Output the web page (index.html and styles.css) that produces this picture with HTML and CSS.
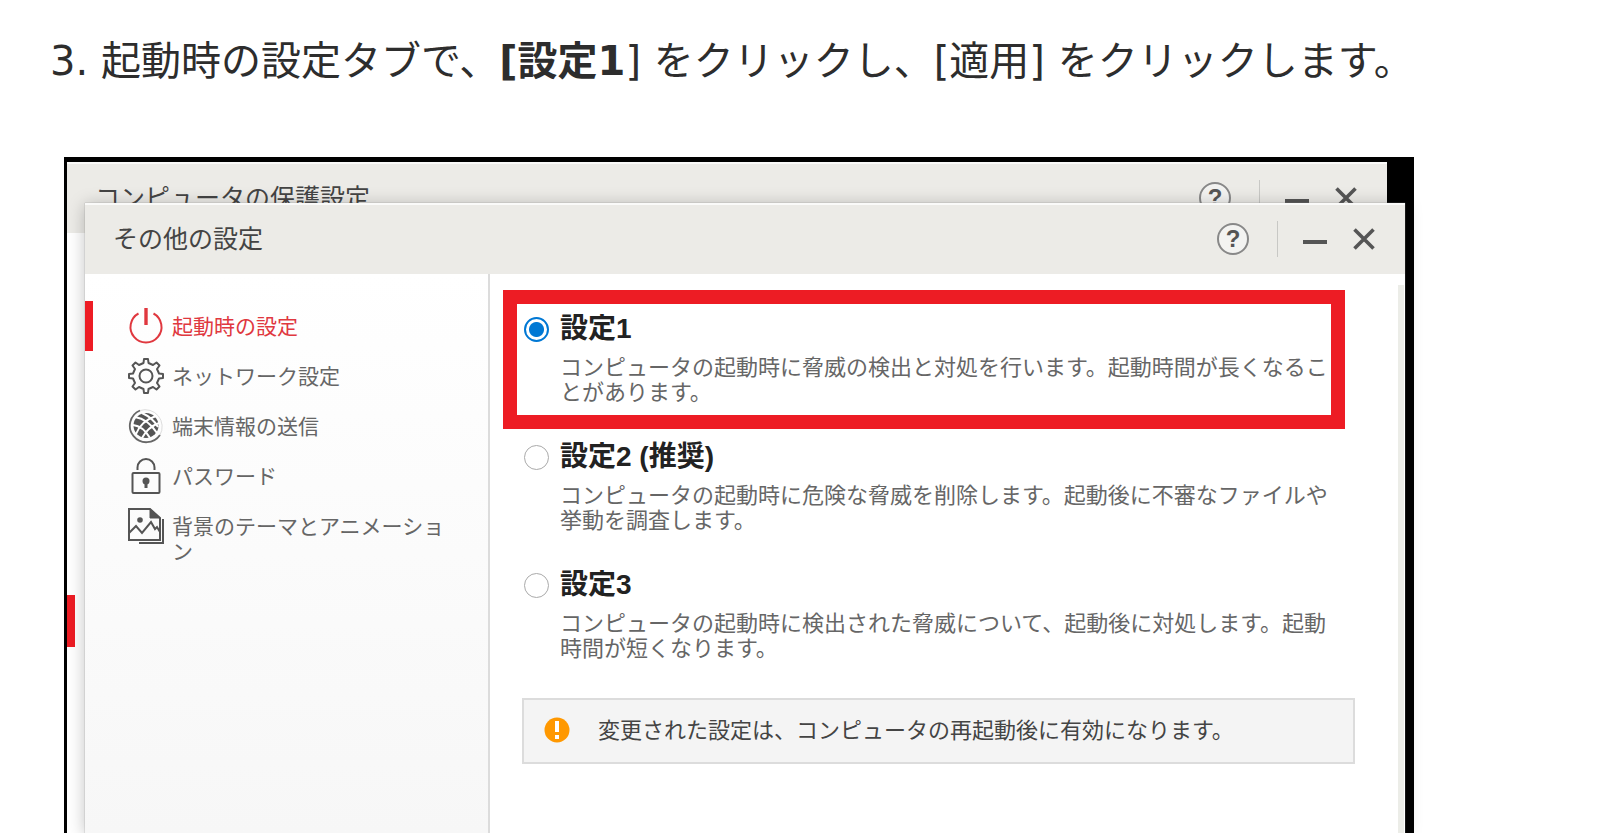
FILE: index.html
```
<!DOCTYPE html>
<html lang="ja">
<head>
    <meta charset="UTF-8">
    <meta name="viewport" content="width=device-width, initial-scale=1.0">
    <title>起動時の設定</title>
    <link rel="stylesheet" href="styles.css">
</head>
<body>
    <p class="step">3. 起動時の設定タブで、<b>[設定1</b>] をクリックし、[適用] をクリックします。</p>

    <div class="desktop">
        <!-- window behind -->
        <section class="window window-back">
            <header class="titlebar">
                <h2 class="title">コンピュータの保護設定</h2>
                <button class="help" aria-label="ヘルプ">?</button>
                <span class="divider"></span>
                <button class="control" aria-label="最小化">
                    <svg width="24" height="24" viewBox="0 0 24 24"><path d="M0 15h24" stroke="#555" stroke-width="4"/></svg>
                </button>
                <button class="control" aria-label="閉じる">
                    <svg width="24" height="24" viewBox="0 0 24 24"><path d="M2.500 2.500l19 19M21.500 2.500l-19 19" stroke="#555" stroke-width="3.600"/></svg>
                </button>
            </header>
            <div class="back-marker"></div>
        </section>

        <section class="window window-front">
            <header class="titlebar">
                <h2 class="title">その他の設定</h2>
                <button class="help" aria-label="ヘルプ">?</button>
                <span class="divider"></span>
                <button class="control" aria-label="最小化">
                    <svg width="24" height="24" viewBox="0 0 24 24"><path d="M0 15h24" stroke="#555" stroke-width="4"/></svg>
                </button>
                <button class="control" aria-label="閉じる">
                    <svg width="24" height="24" viewBox="0 0 24 24"><path d="M2.500 2.500l19 19M21.500 2.500l-19 19" stroke="#555" stroke-width="3.600"/></svg>
                </button>
            </header>

            <div class="content">
                <nav class="sidebar">
                    <a class="nav-item active" href="#startup">
                        <svg class="nav-icon" viewBox="0 0 36 36" fill="none" stroke="#e0383f">
                            <path d="M10.500 5.500A15.500 15.500 0 1 0 25.500 5.500" stroke-width="2"/>
                            <path d="M18 0v17" stroke-width="3.400"/>
                        </svg>
                        <span>起動時の設定</span>
                    </a>
                    <a class="nav-item" href="#network">
                        <svg class="nav-icon" viewBox="0 0 36 36" fill="none" stroke="#555" stroke-width="2" stroke-linejoin="round">
                            <path d="M15.500 5L16 1h4l.5 4 4.500 2 3.500-2.500 3 3L29 11l2 4.500 4 .5v4l-4 .5-2 4.500 2.500 3.500-3 3L25 29l-4.500 2-.5 4h-4l-.5-4-4.500-2-3.500 2.500-3-3L7 25l-2-4.500-4-.5v-4l4-.5L7 11 4.500 7.500l3-3L11 7z"/>
                            <circle cx="18" cy="18" r="6.500"/>
                        </svg>
                        <span>ネットワーク設定</span>
                    </a>
                    <a class="nav-item" href="#feedback">
                        <svg class="nav-icon" viewBox="0 0 36 36" fill="none">
                            <path d="M12 2.500A16.500 16.500 0 1 0 32 27" stroke="#666" stroke-width="1.800"/>
                            <path d="M12 2.500A17 17 0 0 1 32 27" stroke="#ddd" stroke-width="1"/>
                            <circle cx="18" cy="17.500" r="12.500" fill="#555"/>
                            <path d="M7 9Q20 11 29 25M14 5Q25 10 30 19M5 17Q15 18 22 30M28 8Q13 13 8 26M31 15Q20 19 14 30" stroke="#fff" stroke-width="2"/>
                        </svg>
                        <span>端末情報の送信</span>
                    </a>
                    <a class="nav-item" href="#password">
                        <svg class="nav-icon" viewBox="0 0 36 36" fill="none" stroke="#555" stroke-width="2">
                            <path d="M9.500 12V9.500a8.500 8.500 0 0 1 17 0V12"/>
                            <rect x="4.500" y="15" width="27" height="20" rx="1"/>
                            <circle cx="18" cy="23" r="3.500" fill="#555" stroke="none"/>
                            <path d="M18 23v7" stroke-width="3"/>
                        </svg>
                        <span>パスワード</span>
                    </a>
                    <a class="nav-item" href="#theme">
                        <svg class="nav-icon" viewBox="0 0 36 36" fill="none" stroke="#555" stroke-width="2">
                            <path d="M22 1H1v31h31V10z"/>
                            <path d="M22 1v9h10z" fill="#555" stroke-width="1"/>
                            <path d="M35 11v24H11"/>
                            <path d="M1 25l7-7 6 7 9-11 4 7 2-2 3 5"/>
                            <circle cx="12" cy="12" r="2.800" fill="#555" stroke="none"/>
                        </svg>
                        <span>背景のテーマとアニメーション</span>
                    </a>
                </nav>

                <main class="panel">
                    <div class="options">
                        <div class="option highlighted">
                            <input type="radio" name="startup" id="level1" checked>
                            <div>
                                <label for="level1">設定1</label>
                                <p>コンピュータの起動時に脅威の検出と対処を行います。起動時間が長くなることがあります。</p>
                            </div>
                        </div>
                        <div class="option">
                            <input type="radio" name="startup" id="level2">
                            <div>
                                <label for="level2">設定2 (推奨)</label>
                                <p>コンピュータの起動時に危険な脅威を削除します。起動後に不審なファイルや挙動を調査します。</p>
                            </div>
                        </div>
                        <div class="option">
                            <input type="radio" name="startup" id="level3">
                            <div>
                                <label for="level3">設定3</label>
                                <p>コンピュータの起動時に検出された脅威について、起動後に対処します。起動時間が短くなります。</p>
                            </div>
                        </div>
                    </div>

                    <div class="notice">
                        <svg width="26" height="26" viewBox="0 0 26 26">
                            <circle cx="13" cy="13" r="12.500" fill="#ff9800"/>
                            <path d="M13 4v11M13 18v4" stroke="#fff" stroke-width="4"/>
                        </svg>
                        <span>変更された設定は、コンピュータの再起動後に有効になります。</span>
                    </div>
                </main>
                <div class="scroll-track"></div>
            </div>
        </section>
    </div>
</body>
</html>
```
FILE: styles.css
```
* {
    box-sizing: border-box;
}
body {
    margin: 0;
    height: 100vh;
    overflow: hidden;
    display: flex;
    flex-direction: column;
    background: #fff;
    font-family: "Liberation Sans", "Noto Sans CJK JP", sans-serif;
}
.step {
    margin: 31px 50px 66px;
    font-family: "DejaVu Sans", "Noto Sans CJK JP", sans-serif;
    font-size: 40px;
    line-height: 60px;
    color: #2d2d2d;
}
.desktop {
    position: relative;
    flex: 1;
    display: flex;
    margin: 0 206px 0 64px;
    background: #000;
}
.window {
    background: #fff;
}
.window-back {
    position: absolute;
    top: 5px;
    left: 3px;
    right: 27px;
    bottom: 0;
}
.window-front {
    position: relative;
    flex: 1;
    display: flex;
    flex-direction: column;
    margin: 46px 9px 0 21px;
    box-shadow: 0 0 1px #888, 0 2px 16px rgba(0, 0, 0, 0.25);
}
.titlebar {
    display: flex;
    align-items: center;
    height: 71px;
    padding: 0 29px 0 28px;
    background: #ecebe7;
    box-shadow: inset 0 2px #fafaf9;
}
.title {
    flex: 1;
    margin: 0;
    padding-bottom: 4px;
    font-size: 25px;
    font-weight: normal;
    color: #444;
}
.help {
    width: 32px;
    height: 32px;
    padding: 0;
    border: 2px solid #888;
    border-radius: 50%;
    background: #f3f3f1;
    font-family: "Liberation Sans", sans-serif;
    font-size: 24px;
    font-weight: bold;
    line-height: 28px;
    color: #555;
}
.divider {
    width: 1px;
    height: 36px;
    margin-left: 28px;
    background: #c8c8c5;
}
.control {
    display: flex;
    margin-left: 25px;
    padding: 0;
    border: none;
    background: none;
}
.back-marker {
    width: 8px;
    height: 52px;
    margin-top: 362px;
    background: #ed1c24;
}
.content {
    flex: 1;
    display: flex;
}
.sidebar {
    width: 405px;
    flex-shrink: 0;
    padding-top: 27px;
    border-right: 2px solid #dcdcdc;
    background: linear-gradient(#fff, #f7f7f7);
}
.nav-item {
    display: flex;
    align-items: flex-start;
    gap: 8px;
    min-height: 50px;
    padding: 0 24px 0 43px;
    font-size: 21px;
    line-height: 25px;
    color: #666;
    text-decoration: none;
}
.nav-item span {
    padding-top: 13px;
}
.nav-icon {
    width: 36px;
    height: 36px;
    flex-shrink: 0;
    margin-top: 7px;
}
.nav-item.active {
    padding-left: 35px;
    border-left: 8px solid #ed1c24;
    color: #e0383f;
}
.panel {
    flex: 1;
    padding: 30px 43px 0 27px;
}
.options {
    display: flex;
    flex-direction: column;
    gap: 17px;
    margin-right: 24px;
}
.option {
    display: flex;
    gap: 11px;
    padding: 5px 0 10px 7px;
}
.option.highlighted {
    outline: 14px solid #ed1c24;
}
.option input {
    appearance: none;
    width: 25px;
    height: 25px;
    flex-shrink: 0;
    margin: 8px 0 0;
    border: 1px solid #aaa;
    border-radius: 50%;
    background: #fff;
}
.option input:checked {
    border: 2px solid #0078d4;
    background: radial-gradient(circle, #0078d4 7px, #fff 8px);
}
.option label {
    display: block;
    font-size: 28px;
    font-weight: bold;
    line-height: 40px;
    color: #222;
}
.option p {
    margin: 6px 0 0;
    font-size: 22px;
    line-height: 25px;
    color: #666;
}
.notice {
    display: flex;
    align-items: center;
    gap: 28px;
    height: 66px;
    margin: 27px 0 0 5px;
    padding: 0 20px 2px;
    border: 2px solid #dcdcdc;
    background: #f4f4f4;
    font-size: 22px;
    color: #444;
}
.notice span {
    padding-bottom: 4px;
}
.scroll-track {
    width: 6px;
    margin: 11px 1px 0 0;
    background: #ecede8;
}
```
